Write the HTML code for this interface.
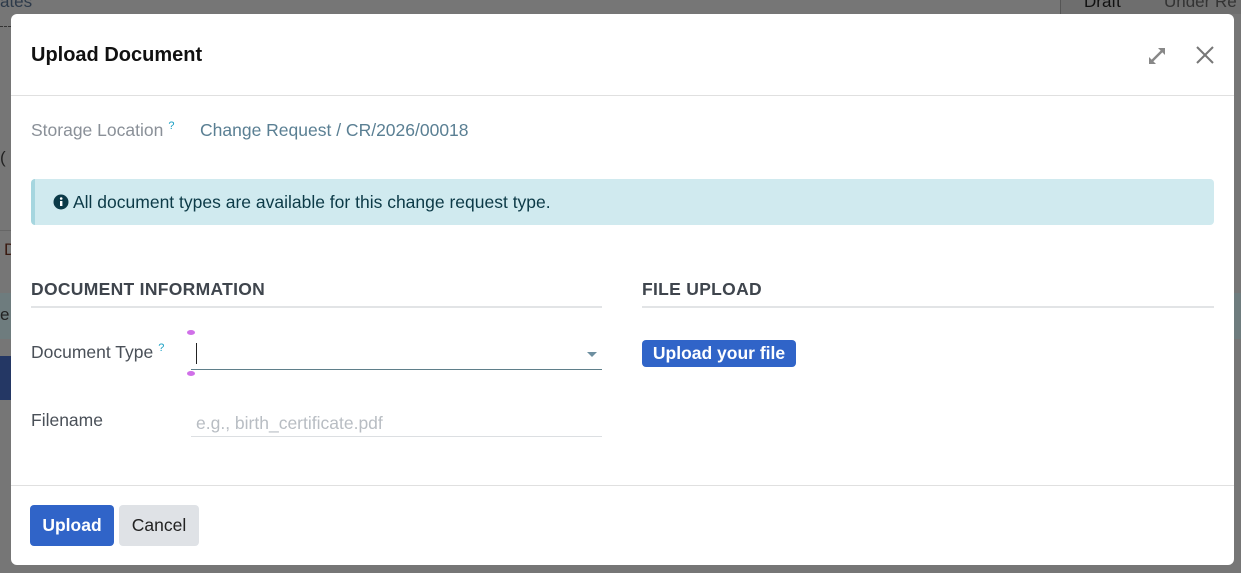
<!DOCTYPE html>
<html><head><style>
*{box-sizing:border-box;margin:0;padding:0}
body{width:1241px;height:573px;overflow:hidden;background:#767676;font-family:"Liberation Sans",sans-serif;position:relative}
.abs{position:absolute}
.modal{position:absolute;left:11px;top:14px;width:1223px;height:551px;background:#fff;border-radius:6px}
.lbl{position:absolute;font-size:17.5px;color:#4a5058}
.q{font-size:11px;color:#1ba0c4;vertical-align:super;margin-left:5px}
h2{position:absolute;font-size:17.5px;font-weight:bold;color:#3f454d;letter-spacing:.3px}
.rule{position:absolute;height:2px;background:#e2e4e6}
</style></head><body>
<div class="abs" style="left:0;top:-8px;font-size:17px;color:#2d3a4a">ates</div>
<div class="abs" style="left:0;top:26px;width:11px;height:1px;border-top:1px dashed #333"></div>
<div class="abs" style="left:0;top:148px;font-size:17px;color:#222">(</div>
<div class="abs" style="left:0;top:230px;width:11px;height:1px;background:#666"></div>
<div class="abs" style="left:4px;top:240px;font-size:17px;color:#3a1a10">D</div>
<div class="abs" style="left:0;top:293px;width:11px;height:46px;background:#6e7c7e"></div>
<div class="abs" style="left:0;top:305px;font-size:17px;color:#222">e</div>
<div class="abs" style="left:0;top:356px;width:11px;height:44px;background:#243764"></div>
<div class="abs" style="left:1234px;top:293px;width:7px;height:46px;background:#6e7c7e"></div>
<div class="abs" style="left:1060px;top:0;width:181px;height:14px;background:#6e6e6e;border-left:1px solid #555"></div>
<div class="abs" style="left:1084px;top:-8px;font-size:17px;color:#111">Draft</div>
<div class="abs" style="left:1164px;top:-8px;font-size:17px;color:#333">Under Re</div>
<div class="modal">
  <div class="abs" style="left:20px;top:30px;font-size:20px;font-weight:bold;color:#111">Upload Document</div>
  <svg class="abs" style="left:1135px;top:31px" width="22" height="22" viewBox="0 0 22 22"><g stroke="#888" stroke-width="2.4" fill="#888"><line x1="4" y1="18" x2="18" y2="4"/><polygon points="12,3 19,3 19,10" stroke="none"/><polygon points="3,12 3,19 10,19" stroke="none"/></g></svg>
  <svg class="abs" style="left:1184px;top:31px" width="20" height="20" viewBox="0 0 20 20"><g stroke="#777" stroke-width="2"><line x1="2" y1="2" x2="18" y2="18"/><line x1="18" y1="2" x2="2" y2="18"/></g></svg>
  <div class="abs" style="left:0;top:81px;width:1223px;height:1px;background:#e0e0e0"></div>
  <div class="lbl" style="left:20px;top:106px;color:#8a9098">Storage Location<span class="q">?</span></div>
  <div class="abs" style="left:189px;top:106px;font-size:17.5px;color:#5a7f93">Change Request / CR/2026/00018</div>
  <div class="abs" style="left:20px;top:165px;width:1183px;height:46px;background:#d0eaef;border-left:4px solid #a6d6df;border-radius:4px"></div>
  <svg class="abs" style="left:42px;top:180px" width="16" height="16" viewBox="0 0 16 16"><circle cx="8" cy="8" r="7.5" fill="#0b3a48"/><rect x="7" y="7" width="2.4" height="5" fill="#fff"/><circle cx="8.2" cy="4.5" r="1.3" fill="#fff"/></svg>
  <div class="abs" style="left:62px;top:178px;font-size:17.5px;color:#0c3a47">All document types are available for this change request type.</div>
  <h2 style="left:20px;top:265px">DOCUMENT INFORMATION</h2>
  <div class="rule" style="left:20px;top:292px;width:571px"></div>
  <h2 style="left:631px;top:265px">FILE UPLOAD</h2>
  <div class="rule" style="left:631px;top:292px;width:572px"></div>
  <div class="lbl" style="left:20px;top:328px">Document Type<span class="q">?</span></div>
  <div class="abs" style="left:180px;top:355px;width:411px;height:1px;background:#5f7f8a"></div>
  <div class="abs" style="left:185px;top:329px;width:1px;height:21px;background:#222"></div>
  <div class="abs" style="left:176px;top:316px;width:8px;height:5px;border-radius:50%;background:#d070e8"></div>
  <div class="abs" style="left:176px;top:357px;width:8px;height:5px;border-radius:50%;background:#d070e8"></div>
  <div class="abs" style="left:576px;top:338px;width:0;height:0;border-left:5px solid transparent;border-right:5px solid transparent;border-top:5px solid #6d8fa0"></div>
  <div class="lbl" style="left:20px;top:396px">Filename</div>
  <div class="abs" style="left:185px;top:399px;font-size:17.5px;color:#b8bdc3">e.g., birth_certificate.pdf</div>
  <div class="abs" style="left:180px;top:422px;width:411px;height:1px;background:#dcdfe2"></div>
  <div class="abs" style="left:631px;top:326px;width:154px;height:27px;background:#3064c8;border-radius:4px;color:#fff;font-weight:bold;font-size:17.5px;text-align:center;line-height:27px">Upload your file</div>
  <div class="abs" style="left:0;top:471px;width:1223px;height:1px;background:#e0e0e0"></div>
  <div class="abs" style="left:19px;top:491px;width:84px;height:41px;background:#3064c8;border-radius:4px;color:#fff;font-weight:bold;font-size:17.5px;text-align:center;line-height:41px">Upload</div>
  <div class="abs" style="left:108px;top:491px;width:80px;height:41px;background:#dfe2e6;border-radius:4px;color:#222;font-size:17.5px;text-align:center;line-height:41px">Cancel</div>
</div>
</body></html>
